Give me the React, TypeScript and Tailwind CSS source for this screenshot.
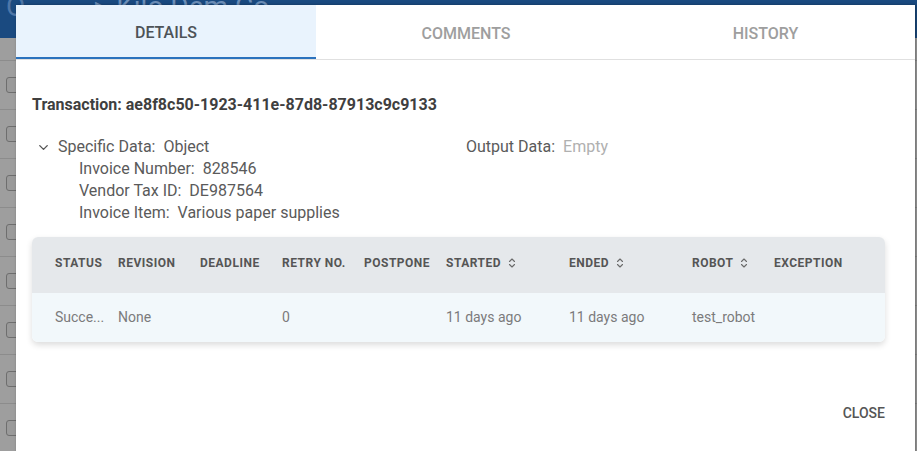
import React from 'react';
import { ChevronDown, ChevronsUpDown } from 'lucide-react';

const columns: { label: string; width: string; sortable?: boolean }[] = [
  { label: 'STATUS', width: '63px' },
  { label: 'REVISION', width: '82px' },
  { label: 'DEADLINE', width: '82px' },
  { label: 'RETRY NO.', width: '82px' },
  { label: 'POSTPONE', width: '82px' },
  { label: 'STARTED', width: '123px', sortable: true },
  { label: 'ENDED', width: '123px', sortable: true },
  { label: 'ROBOT', width: '82px', sortable: true },
  { label: 'EXCEPTION', width: '1fr' },
];

const row = ['Succe...', 'None', '', '0', '', '11 days ago', '11 days ago', 'test_robot', ''];

const gridTemplate = columns.map((c) => c.width).join(' ');

const App: React.FC = () => {
  return (
    <div
      className="relative w-[917px] h-[451px] overflow-hidden bg-[#9e9e9e]"
      style={{ fontFamily: 'Roboto, "Liberation Sans", sans-serif' }}
    >
      {/* Page behind the overlay */}
      <div className="h-[38px] bg-[#1a4a80] flex items-start overflow-hidden">
        <span className="ml-[6px] -mt-[14px] text-[28px] text-[#4f77a8]">O</span>
        <span className="ml-[70px] -mt-[14px] text-[28px] text-[#6d8fb8]">▸ Kilo Dem Co</span>
      </div>
      <div className="h-[23px] border-b border-[#8c8c8c]" />
      <div className="flex flex-col">
        {Array.from({ length: 8 }).map((_, i) => (
          <div key={i} className="h-[49px] border-b border-[#8c8c8c] flex items-center pl-[6px]">
            <div className="w-[16px] h-[16px] rounded-[3px] border border-[#6e6e6e] bg-[#9a9a9a]" />
          </div>
        ))}
      </div>

      {/* Dialog */}
      <div className="absolute left-[16px] top-[5px] w-[899px] h-[470px] bg-white shadow-[1px_0_3px_rgba(0,0,0,0.35)] flex flex-col">
        {/* Tabs */}
        <div className="flex h-[55px] border-b border-[#e0e0e0]">
          <div className="w-[300px] flex items-center justify-center pt-[3px] bg-[#e9f3fd] border-b-2 border-[#2b72bd] text-[16px] font-medium text-[#4d5257]">
            DETAILS
          </div>
          <div className="w-[300px] flex items-center justify-center pt-[3px] text-[16px] font-medium text-[#9e9e9e]">
            COMMENTS
          </div>
          <div className="flex-1 flex items-center justify-center pt-[3px] text-[16px] font-medium text-[#9e9e9e]">
            HISTORY
          </div>
        </div>

        <div className="px-4">
          <div className="mt-[34px] text-[16px] leading-[22px] font-bold text-[#3f3f3f]">
            Transaction: ae8f8c50-1923-411e-87d8-87913c9c9133
          </div>

          <div className="mt-[20px] flex text-[16px] leading-[22px] text-[#5a5a5a]">
            <div className="w-[434px]">
              <div className="flex items-center">
                <ChevronDown size={15} strokeWidth={2.2} className="ml-[4px] mr-[7px] text-[#555]" />
                <span>Specific Data:&nbsp;&nbsp;Object</span>
              </div>
              <div className="pl-[47px]">
                <div>Invoice Number:&nbsp;&nbsp;828546</div>
                <div>Vendor Tax ID:&nbsp;&nbsp;DE987564</div>
                <div>Invoice Item:&nbsp;&nbsp;Various paper supplies</div>
              </div>
            </div>
            <div>
              Output Data:&nbsp;&nbsp;<span className="text-[#b0b0b0]">Empty</span>
            </div>
          </div>

          {/* Table */}
          <div className="mt-[13px] mr-[14px] rounded-[6px] shadow-[0_3px_6px_rgba(0,0,0,0.14)] overflow-hidden">
            <div
              className="grid h-[56px] items-center bg-[#e5e8eb] pl-[23px] pb-[4px] text-[12px] font-bold tracking-[0.5px] text-[#555]"
              style={{ gridTemplateColumns: gridTemplate }}
            >
              {columns.map((c) => (
                <div key={c.label} className="flex items-center">
                  {c.label}
                  {c.sortable && <ChevronsUpDown size={12} strokeWidth={2.2} className="ml-[5px] text-[#6a6a6a]" />}
                </div>
              ))}
            </div>
            <div
              className="grid h-[49px] items-center bg-[#f2f8fb] pl-[23px] pb-[1px] text-[14px] text-[#7b7b7b]"
              style={{ gridTemplateColumns: gridTemplate }}
            >
              {row.map((v, i) => (
                <div key={i}>{v}</div>
              ))}
            </div>
          </div>

          <div className="flex justify-end mt-[57px] mr-[6px]">
            <button className="px-2 py-1 text-[14px] font-medium text-[#555]">CLOSE</button>
          </div>
        </div>
      </div>
    </div>
  );
};

export default App;
